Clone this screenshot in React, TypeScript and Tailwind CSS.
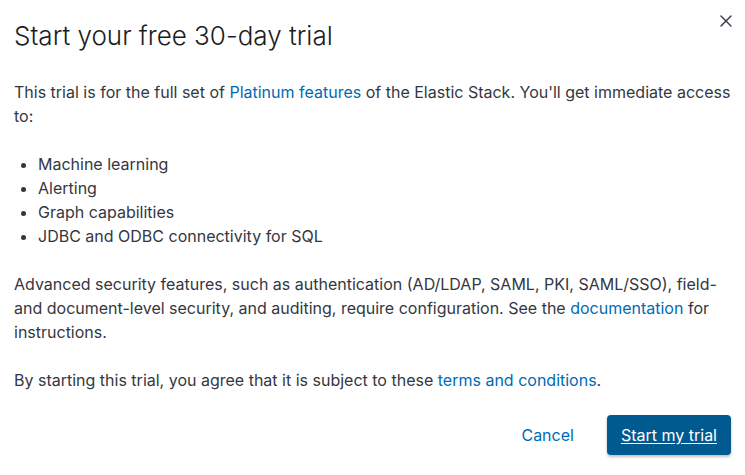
import { X } from "lucide-react";

const features = [
  "Machine learning",
  "Alerting",
  "Graph capabilities",
  "JDBC and ODBC connectivity for SQL",
];

function Link({ children }: { children: React.ReactNode }) {
  return <a className="text-[#006bb4] cursor-pointer">{children}</a>;
}

export default function App() {
  return (
    <div className="w-[745px] h-[475px] bg-white text-[#343741] font-['Inter',sans-serif] relative">
      <button className="absolute right-[9px] top-[11px] text-[#343741]">
        <X size={20} strokeWidth={1.6} />
      </button>
      <div className="px-[14px] pt-[18px]">
        <h1 className="text-[26px] leading-[36px] font-light text-[#1a1c21]">Start your free 30-day trial</h1>
        <div className="mt-[26px] text-base leading-6">
          <p>
            This trial is for the full set of <Link>Platinum features</Link> of the Elastic Stack. You'll get
            immediate access to:
          </p>
          <ul className="mt-6 pl-6 list-disc">
            {features.map((f) => (
              <li key={f}>{f}</li>
            ))}
          </ul>
          <p className="mt-6">
            Advanced security features, such as authentication (AD/LDAP, SAML, PKI, SAML/SSO), field- and
            document-level security, and auditing, require configuration. See the <Link>documentation</Link> for
            instructions.
          </p>
          <p className="mt-6">
            By starting this trial, you agree that it is subject to these <Link>terms and conditions</Link>.
          </p>
        </div>
        <div className="flex justify-end items-center gap-[33px] mt-[23px]">
          <button className="text-[#006bb4] text-base">Cancel</button>
          <button className="h-10 px-[14px] rounded bg-[#005a8f] text-white text-base underline underline-offset-2 shadow-[0_2px_3px_rgba(0,0,0,0.25)]">
            Start my trial
          </button>
        </div>
      </div>
    </div>
  );
}
